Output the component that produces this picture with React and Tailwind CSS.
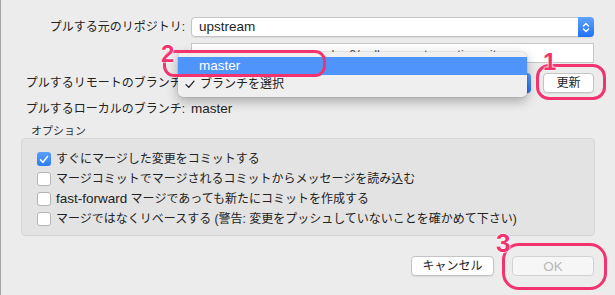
import React from "react";

const PINK = "border-[#f2336f]";

function Chevrons() {
  return (
    <svg width="8" height="13" viewBox="0 0 8 13" fill="none" stroke="white" strokeWidth="1.4" strokeLinecap="round" strokeLinejoin="round">
      <path d="M1.5 5 L4 2.5 L6.5 5" />
      <path d="M1.5 8 L4 10.5 L6.5 8" />
    </svg>
  );
}

function Popup({ children, className = "" }) {
  return (
    <div className={`h-[20px] flex items-stretch bg-white border border-[#c4c4c4] rounded-[4px] shadow-[0_1px_1px_rgba(0,0,0,0.08)] ${className}`}>
      <span className="flex-1 pl-[7px] flex items-center text-[13.5px] text-[#1e1e1e]">{children}</span>
      <span className="w-[16px] -my-px -mr-px rounded-r-[4px] bg-linear-to-b from-[#5ea2fb] to-[#1f72f1] flex items-center justify-center">
        <Chevrons />
      </span>
    </div>
  );
}

function Checkbox({ checked }) {
  if (checked) {
    return (
      <span className="w-[14px] h-[14px] rounded-[3px] bg-linear-to-b from-[#5aa0fb] to-[#2a7cf3] flex items-center justify-center shrink-0">
        <svg width="10" height="9" viewBox="0 0 10 9" fill="none" stroke="white" strokeWidth="1.6" strokeLinecap="round" strokeLinejoin="round">
          <path d="M1.5 4.8 L3.9 7.3 L8.5 1.5" />
        </svg>
      </span>
    );
  }
  return <span className="w-[14px] h-[14px] rounded-[3px] bg-white border border-[#b4b4b4] shrink-0" />;
}

function Digit({ n, className }) {
  return (
    <span
      className={`absolute text-[24px] leading-none font-bold text-[#f2336f] [text-shadow:0_0_2px_white,0_0_2px_white,0_0_1px_white] ${className}`}
      style={{ fontFamily: '"Liberation Sans", Arial, sans-serif' }}
    >
      {n}
    </span>
  );
}

export default function App() {
  const options = [
    { checked: true, label: "すぐにマージした変更をコミットする" },
    { checked: false, label: "マージコミットでマージされるコミットからメッセージを読み込む" },
    { checked: false, label: <><span className="text-[13.5px]">fast-forward</span> マージであっても新たにコミットを作成する</> },
    { checked: false, label: "マージではなくリベースする (警告: 変更をプッシュしていないことを確かめて下さい)" },
  ];

  return (
    <div
      className="relative w-[615px] h-[295px] overflow-hidden bg-[#ececec] text-[12px] text-[#222] shadow-[inset_1px_0_0_#a3a3a3]"
      style={{ fontFamily: '"Liberation Sans", "Noto Sans CJK JP", sans-serif' }}
    >
      {/* form rows */}
      <div className="pl-[20px] pr-[21px] pt-[17px] grid grid-cols-[165px_1fr] gap-x-[6px] items-center">
        <div className="text-right">プルする元のリポジトリ:</div>
        <Popup>upstream</Popup>

        <div />
        <div className="mt-[6px] h-[20px] bg-white border border-[#c6c6c6] flex items-start pt-[3px] pl-[128px] text-[13px] leading-[16px] text-[#555] overflow-hidden whitespace-nowrap">
          e-ks-0/pull-request-creation-git
        </div>

        <div className="mt-[10px] text-right">プルするリモートのブランチ:</div>
        <div className="mt-[10px] flex items-center">
          <Popup className="flex-1" />
          <button className="ml-[12px] w-[51px] h-[20px] bg-white border border-[#c4c4c4] rounded-[4px] shadow-[0_1px_1px_rgba(0,0,0,0.08)] text-[12px] text-[#1e1e1e]">
            更新
          </button>
        </div>

        <div className="mt-[8px] h-[16px] flex items-center justify-end">プルするローカルのブランチ:</div>
        <div className="mt-[8px] h-[16px] flex items-center text-[13.5px]">master</div>
      </div>

      {/* options */}
      <div className="ml-[21px] mr-[20px]">
        <div className="mt-[7px] h-[14px] pl-[10px] text-[11px] leading-[14px] text-[#333]">オプション</div>
        <div className="h-[98px] bg-[#e3e3e3] border border-[#d6d6d6] rounded-[4px] pt-[10px] pl-[15px]">
          {options.map((o, i) => (
            <div key={i} className="h-[20px] flex items-center gap-[5px] whitespace-nowrap">
              <Checkbox checked={o.checked} />
              <span>{o.label}</span>
            </div>
          ))}
        </div>
      </div>

      {/* bottom buttons */}
      <div className="mt-[20px] pr-[21px] flex justify-end gap-[18px]">
        <button className="w-[83px] h-[20px] bg-white border border-[#c4c4c4] rounded-[4px] shadow-[0_1px_1px_rgba(0,0,0,0.08)] text-[12px] text-[#1e1e1e]">
          キャンセル
        </button>
        <button className="w-[82px] h-[20px] bg-[#f6f6f6] border border-[#d2d2d2] rounded-[4px] text-[13.5px] text-[#b8b8b8]">
          OK
        </button>
      </div>

      {/* open popup menu */}
      <div className="absolute left-[178px] top-[52px] w-[349px] pt-[5px] pb-[4px] rounded-[5px] bg-[#efefef] shadow-[0_4px_12px_rgba(0,0,0,0.3),0_0_0_0.5px_rgba(0,0,0,0.12)]">
        <div className="h-[18px] bg-[#4f94fa] text-white pl-[21px] flex items-center text-[13.5px]">master</div>
        <div className="h-[18px] flex items-center pl-[7px]">
          <svg width="10" height="9" viewBox="0 0 10 9" fill="none" stroke="#222" strokeWidth="1.3" strokeLinecap="round" strokeLinejoin="round" className="mr-[5px]">
            <path d="M1 4.6 L3.8 7.4 L9 1.2" />
          </svg>
          ブランチを選択
        </div>
      </div>

      {/* annotations */}
      <div className={`absolute left-[163px] top-[50px] w-[163px] h-[27px] border-[3px] ${PINK} rounded-[11px]`} />
      <Digit n="2" className="left-[161px] top-[42px]" />

      <div className={`absolute left-[536px] top-[64px] w-[70px] h-[36px] border-[3px] ${PINK} rounded-[13px]`} />
      <Digit n="1" className="left-[543px] top-[50px]" />

      <div className={`absolute left-[502px] top-[243px] w-[105px] h-[47px] border-[3px] ${PINK} rounded-[17px]`} />
      <Digit n="3" className="left-[496px] top-[230px] text-[26px]" />
    </div>
  );
}
